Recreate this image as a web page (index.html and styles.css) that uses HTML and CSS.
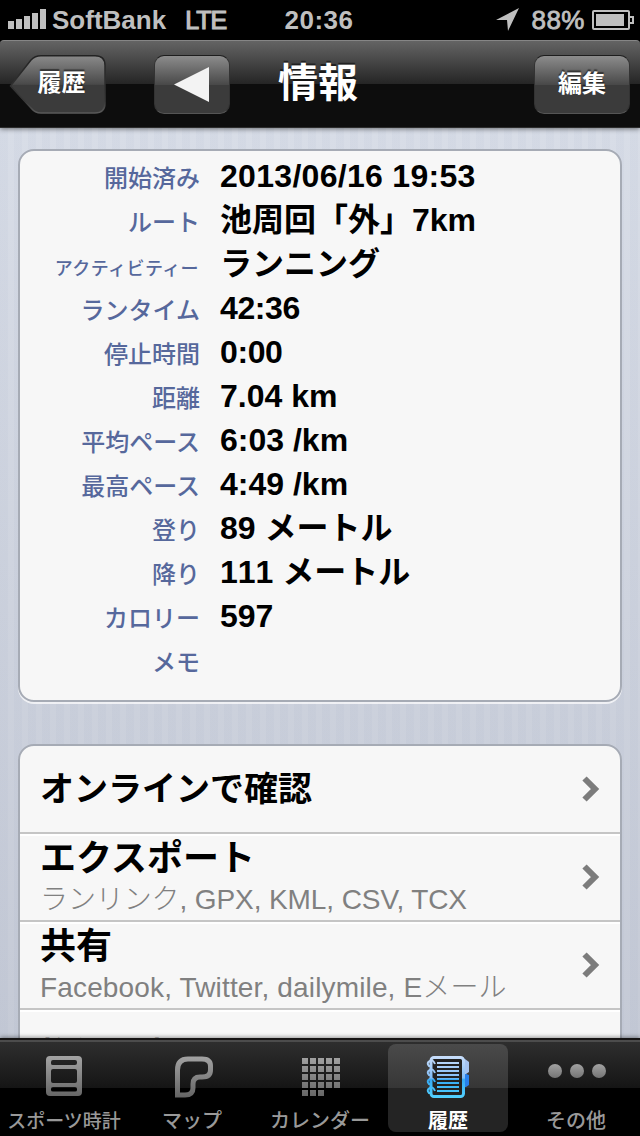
FILE: index.html
```html
<!DOCTYPE html>
<html lang="ja">

<head>
  <meta charset="UTF-8">
  <meta name="viewport" content="width=device-width, initial-scale=1.0">
  <title>情報</title>
  <link rel="stylesheet" href="styles.css">
</head>

<body>
  <div class="app">
    <div class="status-bar">
      <div class="status-left">
        <svg class="signal" width="38" height="20" viewBox="0 0 38 20" fill="#bfbfbf">
          <path d="M0 12h6v8H0zM8 10h6v10H8zM16 7h6v13h-6zM24 4h6v16h-6zM32 0h6v20h-6z"/>
        </svg>
        <span class="carrier">SoftBank</span>
        <span class="network">LTE</span>
      </div>
      <span class="time">20:36</span>
      <div class="status-right">
        <svg width="24" height="24" viewBox="0 0 24 24" fill="#bfbfbf"><path d="M23 0L12 23L11 12L0 12Z"/></svg>
        <span class="percent">88%</span>
        <svg class="battery" width="42" height="20" viewBox="0 0 42 20">
          <rect x="1" y="1" width="36" height="18" rx="1" fill="none" stroke="#bfbfbf" stroke-width="2"/>
          <rect x="4" y="4" width="28" height="12" fill="#bfbfbf"/>
          <path d="M38 7h3v6h-3" fill="none" stroke="#bfbfbf" stroke-width="2"/>
        </svg>
      </div>
    </div>

    <div class="nav-bar">
      <button class="back-btn">
        <svg width="98" height="62" viewBox="0 0 98 62">
          <defs>
            <linearGradient id="btnFill" x1="0" y1="0" x2="0" y2="1">
              <stop offset="0" stop-color="#8a8a8a"/>
              <stop offset="0.5" stop-color="#494949"/>
              <stop offset="0.51" stop-color="#3b3b3b"/>
              <stop offset="1" stop-color="#3b3b3b"/>
            </linearGradient>
            <linearGradient id="btnEdge" x1="0" y1="0" x2="0" y2="1">
              <stop offset="0" stop-color="#222"/>
              <stop offset="0.8" stop-color="#383838"/>
              <stop offset="1" stop-color="#5a5a5a"/>
            </linearGradient>
          </defs>
          <path d="M1.500 31L22 5Q26 0.800 32 0.800H86Q96 0.800 96 10.500V48Q96 58 86 58H32Q26 58 22 53Z" fill="url(#btnFill)" stroke="url(#btnEdge)" stroke-width="1.500"/>
        </svg>
        <span>履歴</span>
      </button>
      <button class="btn prev-btn">
        <svg width="35" height="35" viewBox="0 0 35 35" fill="#f3f3f3"><path d="M0 17.500L35 0V35Z"/></svg>
      </button>
      <h1>情報</h1>
      <button class="btn edit-btn"><span>編集</span></button>
    </div>

    <div class="content">
      <dl class="card details">
        <div class="row"><dt>開始済み</dt><dd class="date">2013/06/16 19:53</dd></div>
        <div class="row"><dt>ルート</dt><dd>池周回「外」7km</dd></div>
        <div class="row"><dt class="small">アクティビティー</dt><dd>ランニング</dd></div>
        <div class="row"><dt>ランタイム</dt><dd class="run-time">42:36</dd></div>
        <div class="row"><dt>停止時間</dt><dd class="run-time">0:00</dd></div>
        <div class="row"><dt>距離</dt><dd>7.04 km</dd></div>
        <div class="row"><dt>平均ペース</dt><dd>6:03 /km</dd></div>
        <div class="row"><dt>最高ペース</dt><dd>4:49 /km</dd></div>
        <div class="row"><dt>登り</dt><dd>89 メートル</dd></div>
        <div class="row"><dt>降り</dt><dd>111 メートル</dd></div>
        <div class="row"><dt>カロリー</dt><dd>597</dd></div>
        <div class="row"><dt>メモ</dt><dd>&nbsp;</dd></div>
      </dl>

      <ul class="card menu">
        <li>
          <div class="menu-text"><h2 class="fit">オンラインで確認</h2></div>
          <svg class="chevron" width="18" height="26" viewBox="0 0 18 26"><path d="M2.500 2.500L13 13L2.500 23.500"/></svg>
        </li>
        <li>
          <div class="menu-text">
            <h2>エクスポート</h2>
            <p>ランリンク, GPX, KML, CSV, TCX</p>
          </div>
          <svg class="chevron" width="18" height="26" viewBox="0 0 18 26"><path d="M2.500 2.500L13 13L2.500 23.500"/></svg>
        </li>
        <li>
          <div class="menu-text">
            <h2>共有</h2>
            <p class="wide">Facebook, Twitter, dailymile, Eメール</p>
          </div>
          <svg class="chevron" width="18" height="26" viewBox="0 0 18 26"><path d="M2.500 2.500L13 13L2.500 23.500"/></svg>
        </li>
        <li class="last">
          <div class="menu-text"><h2>複製比較</h2></div>
        </li>
      </ul>
    </div>

    <div class="tab-bar">
      <div class="tab">
        <svg width="44" height="44" viewBox="0 0 44 44">
          <defs>
            <linearGradient id="gray" gradientUnits="userSpaceOnUse" x1="0" y1="0" x2="0" y2="44">
              <stop offset="0" stop-color="#a5a5a5"/>
              <stop offset="1" stop-color="#626262"/>
            </linearGradient>
          </defs>
          <path fill="url(#gray)" fill-rule="evenodd" d="M8 1H36Q40 1 40 5V37Q40 41 36 41H8Q4 41 4 37V5Q4 1 8 1ZM11 5Q9 5 9 7V8.500Q9 10 11 10H33Q35 10 35 8V7Q35 5 33 5ZM11 14Q9 14 9 16V26Q9 28 11 28H33Q35 28 35 26V16Q35 14 33 14ZM11 32Q9 32 9 34V35Q9 36.500 11 36.500H33Q35 36.500 35 35V34Q35 32 33 32Z"/>
        </svg>
        <span class="narrow">スポーツ時計</span>
      </div>
      <div class="tab">
        <svg width="44" height="44" viewBox="0 0 44 44">
          <path fill="none" stroke="url(#gray)" stroke-width="5" d="M7.500 40V15Q7.500 4 18 4H32Q40.500 4 40.500 11V15Q40.500 22 32 22H30Q23 22 23 29V33Q23 40 15 40Z"/>
        </svg>
        <span>マップ</span>
      </div>
      <div class="tab">
        <svg width="44" height="44" viewBox="0 0 44 44">
          <path fill="url(#gray)" d="M4 3h6v6H4zM12 3h6v6h-6zM20 3h6v6h-6zM28 3h6v6h-6zM36 3h6v6h-6zM4 11h6v6H4zM12 11h6v6h-6zM20 11h6v6h-6zM28 11h6v6h-6zM36 11h6v6h-6zM4 19h6v6H4zM12 19h6v6h-6zM20 19h6v6h-6zM28 19h6v6h-6zM36 19h6v6h-6zM4 27h6v6H4zM12 27h6v6h-6zM20 27h6v6h-6zM28 27h6v6h-6zM36 27h6v6h-6zM4 35h6v6H4zM12 35h6v6h-6zM20 35h6v6h-6z"/>
        </svg>
        <span>カレンダー</span>
      </div>
      <div class="tab active">
        <svg width="44" height="44" viewBox="0 0 44 44">
          <defs>
            <linearGradient id="blue" gradientUnits="userSpaceOnUse" x1="0" y1="0" x2="0" y2="44">
              <stop offset="0" stop-color="#cde0fb"/>
              <stop offset="0.52" stop-color="#82bdf7"/>
              <stop offset="0.56" stop-color="#35a9f5"/>
              <stop offset="1" stop-color="#55d4ff"/>
            </linearGradient>
          </defs>
          <path d="M36 4h3l4 3v10l-3 2h-4z" fill="#a5c4f1"/>
          <path d="M36 19h4l3 1v10l-3 2h-4z" fill="#2880ec"/>
          <rect x="5" y="2.500" width="32.500" height="39" rx="3" fill="#222" stroke="url(#blue)" stroke-width="3"/>
          <path d="M11 8h22M11 12h22M11 16h22M11 20h22M11 24h22M11 28h22M11 32h22M11 36h22" stroke="url(#blue)" stroke-width="2"/>
          <g fill="none" stroke="url(#blue)" stroke-width="2">
            <path d="M9 9Q7 4 4 6Q0 8 3 11H6"/>
            <path d="M9 18Q7 13 4 15Q0 17 3 20H6"/>
            <path d="M9 27Q7 22 4 24Q0 26 3 29H6"/>
            <path d="M9 36Q7 31 4 33Q0 35 3 38H6"/>
          </g>
        </svg>
        <span>履歴</span>
      </div>
      <div class="tab">
        <svg width="60" height="44" viewBox="0 0 60 44">
          <defs>
            <linearGradient id="dot" x1="0" y1="0" x2="0" y2="1">
              <stop offset="0" stop-color="#a2a2a2"/>
              <stop offset="1" stop-color="#747474"/>
            </linearGradient>
          </defs>
          <g fill="url(#dot)">
            <circle cx="9" cy="16" r="7"/>
            <circle cx="31" cy="16" r="7"/>
            <circle cx="53" cy="16" r="7"/>
          </g>
        </svg>
        <span>その他</span>
      </div>
    </div>
  </div>
</body>

</html>
```
FILE: styles.css
```css
* {
  box-sizing: border-box;
  margin: 0;
  padding: 0;
}

body {
  background: #000;
  font-family: "Liberation Sans", "Noto Sans CJK JP", sans-serif;
}

svg {
  display: block;
  flex: none;
}

.app {
  width: 640px;
  height: 1136px;
  display: flex;
  flex-direction: column;
  overflow: hidden;
}

/* status bar */
.status-bar {
  height: 40px;
  padding: 0 6px 0 8px;
  display: grid;
  grid-template-columns: 1fr auto 1fr;
  align-items: center;
  color: #bfbfbf;
  font-size: 26px;
  font-weight: bold;
  line-height: 40px;
}

.status-left,
.status-right {
  display: flex;
  align-items: center;
}

.status-right {
  justify-content: flex-end;
}

.signal {
  margin: 0 6px 2px 0;
}

.network {
  margin-left: 19px;
  font-size: 25px;
  font-weight: normal;
  letter-spacing: -1px;
  -webkit-text-stroke: 1.2px #bfbfbf;
}

.time {
  margin-left: -4px;
  letter-spacing: 0.5px;
}

.percent {
  margin: 0 7px 0 11px;
  font-weight: normal;
  letter-spacing: 0.5px;
  -webkit-text-stroke: 0.8px #bfbfbf;
}

/* navigation bar */
.nav-bar {
  height: 88px;
  flex: none;
  position: relative;
  z-index: 1;
  display: flex;
  align-items: flex-start;
  padding: 14px 10px 0 9px;
  border-top: 1px solid #868686;
  border-bottom: 1px solid #2c2c2c;
  border-radius: 4px 4px 0 0;
  background: linear-gradient(#646464, #252525 43px, #0d0d0d 43px, #0d0d0d);
  box-shadow: 0 1px 5px rgba(0, 0, 0, 0.5);
}

.nav-bar button {
  border: none;
  color: #fff;
  font: bold 24px/52px "Noto Sans CJK JP", sans-serif;
  text-shadow: 0 -2px 1px rgba(0, 0, 0, 0.5);
}

.nav-bar .back-btn {
  display: grid;
  width: 98px;
  height: 60px;
  background: none;
}

.back-btn svg,
.back-btn span {
  grid-area: 1 / 1;
}

.back-btn span {
  padding-left: 7px;
}

.nav-bar .btn {
  height: 59px;
  border: 1px solid #333;
  border-top-color: #1d1d1d;
  border-bottom-color: #555;
  border-radius: 10px;
  background: linear-gradient(#8c8c8c, #494949 50%, #3b3b3b 51%, #3b3b3b);
}

.nav-bar .prev-btn {
  width: 76px;
  margin-left: 47px;
  padding-left: 19px;
}

.nav-bar h1 {
  flex: 1;
  padding-right: 128px;
  color: #fff;
  font: bold 40px/50px "Noto Sans CJK JP", sans-serif;
  text-align: center;
  text-shadow: 0 -2px 0 rgba(0, 0, 0, 0.5);
}

.nav-bar .edit-btn {
  width: 96px;
  padding-bottom: 6px;
}

/* grouped tables */
.content {
  flex: 1;
  min-height: 0;
  overflow: hidden;
  padding: 21px 18px 0;
  background:
    repeating-linear-gradient(90deg, rgba(80, 100, 150, 0.03) 0 8px, transparent 8px 14px),
    linear-gradient(#d8dde7, #c5cad6);
}

.card {
  border: 2px solid #a6abb5;
  border-radius: 16px;
  background: #f7f7f7;
  box-shadow: 0 2px 0 rgba(255, 255, 255, 0.7);
}

.details {
  height: 553px;
  padding-top: 3px;
}

.row {
  height: 44px;
  display: flex;
  align-items: baseline;
  line-height: 44px;
}

.row dt {
  width: 180px;
  margin-right: 20px;
  color: #56689c;
  font-size: 24px;
  font-weight: 500;
  text-align: right;
}

.row dt.small {
  padding-right: 1px;
  font-size: 18px;
  letter-spacing: 0.4px;
}

.row dd {
  font-size: 32px;
  font-weight: bold;
  font-kerning: none;
}

.row .date {
  letter-spacing: 0.3px;
}

.row .run-time {
  letter-spacing: -0.4px;
}

.menu {
  height: 400px;
  margin-top: 42px;
  list-style: none;
}

.menu li {
  height: 88px;
  display: flex;
  align-items: center;
  justify-content: space-between;
  padding: 0 20px;
  border-bottom: 2px solid #c5c5c5;
  box-shadow: inset 0 2px 0 #fff;
}

.menu li:first-child {
  box-shadow: none;
  border-radius: 14px 14px 0 0;
}

.menu li.last {
  padding-top: 5px;
}

.menu h2 {
  padding-top: 2px;
  font-size: 36px;
  line-height: 44px;
}

.menu .fit {
  padding-top: 0;
  font-size: 34px;
}

.menu p {
  color: #808080;
  font-size: 28px;
  font-weight: 300;
  letter-spacing: -0.1px;
  line-height: 38px;
}

.menu p.wide {
  letter-spacing: 0.15px;
}

.chevron path {
  fill: none;
  stroke: #7c7c7c;
  stroke-width: 6;
}

/* tab bar */
.tab-bar {
  height: 98px;
  flex: none;
  position: relative;
  display: grid;
  grid-template-columns: repeat(5, 128px);
  padding-top: 4px;
  border-top: 2px solid #161414;
  background: linear-gradient(#4c4c4c 2px, #2e2e2e 2px, #151515 48px, #000 48px);
  box-shadow: 0 -1px 4px rgba(0, 0, 0, 0.4);
}

.tab {
  width: 120px;
  height: 88px;
  justify-self: center;
  display: flex;
  flex-direction: column;
  align-items: center;
  padding-top: 11px;
  border-radius: 8px;
  color: #999;
  font: 500 20px/30px "Noto Sans CJK JP", sans-serif;
  white-space: nowrap;
}

.tab span {
  margin-top: 6px;
}

.tab .narrow {
  font-size: 19px;
}

.tab.active {
  background: linear-gradient(#4a4a4a, #363636 44px, #242424 44px);
  color: #fff;
  font-weight: bold;
}
```
